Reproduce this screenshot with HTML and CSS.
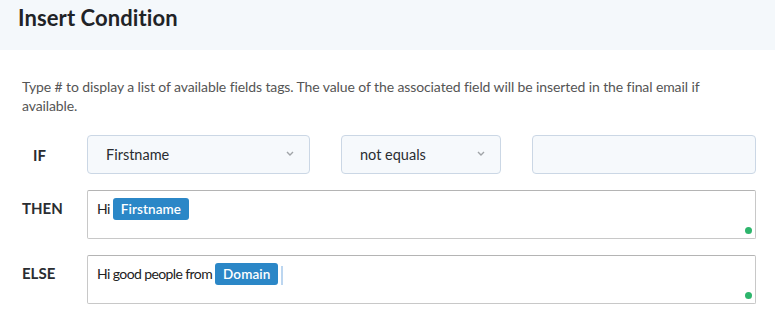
FILE: index.html
```html
<!DOCTYPE html>
<html lang="en">
<head>
  <meta charset="UTF-8">
  <meta name="viewport" content="width=device-width, initial-scale=1.0">
  <title>Insert Condition</title>
  <link rel="stylesheet" href="styles.css">
</head>
<body>
  <div class="header">
    <h1>Insert Condition</h1>
  </div>

  <div class="content">
    <p class="hint">Type # to display a list of available fields tags. The value of the associated field will be inserted in the final email if available.</p>

    <div class="row row-if">
      <div class="label label-if">IF</div>
      <div class="select select-field">
        <span>Firstname</span>
        <svg class="chevron" width="8" height="5" viewBox="0 0 8 5"><path d="M1 1 L4 4 L7 1" fill="none" stroke="#a0a4a8" stroke-width="1.4"/></svg>
      </div>
      <div class="select select-op">
        <span>not equals</span>
        <svg class="chevron" width="8" height="5" viewBox="0 0 8 5"><path d="M1 1 L4 4 L7 1" fill="none" stroke="#a0a4a8" stroke-width="1.4"/></svg>
      </div>
      <div class="select select-value"></div>
    </div>

    <div class="row">
      <div class="label">THEN</div>
      <div class="editor">
        Hi <span class="tag">Firstname</span>
        <span class="dot"></span>
      </div>
    </div>

    <div class="row">
      <div class="label">ELSE</div>
      <div class="editor">
        Hi good people from <span class="tag">Domain</span><span class="caret"></span>
        <span class="dot"></span>
      </div>
    </div>
  </div>
</body>
</html>
```

FILE: styles.css
```css
body {
  margin: 0;
  font-family: Lato, 'Open Sans', sans-serif;
  color: #333;
  background: #fff;
}
.header {
  background: #f4f8fb;
  height: 50px;
  padding: 0 18px;
  display: flex;
  align-items: center;
}
h1 {
  margin: 0 0 16px;
  font-size: 22px;
  font-weight: 700;
  color: #1f2327;
  letter-spacing: 0.1px;
}
.content {
  padding: 0 19px 0 22px;
}
.hint {
  margin: 27px 0 20px;
  font-size: 14px;
  line-height: 19px;
  letter-spacing: -0.1px;
  color: #555;
}
.row {
  display: flex;
  margin-bottom: 16px;
}
.label {
  width: 65px;
  flex-shrink: 0;
  font-size: 15px;
  font-weight: 700;
  color: #2a2d31;
  padding-top: 9px;
}
.label-if {
  padding-top: 11px;
  padding-left: 11px;
  width: 54px;
}
.row-if {
  gap: 31px;
}
.row-if .label {
  margin-right: -31px;
}
.select {
  height: 37px;
  border: 1px solid #cbd7e5;
  border-radius: 4px;
  background: #f6f9fc;
  display: flex;
  align-items: center;
  justify-content: space-between;
  padding: 0 15px 0 18px;
  font-size: 14.5px;
  color: #2a2d31;
}
.select-field {
  width: 188px;
}
.select-op {
  width: 125px;
}
.select-value {
  flex: 1;
}
.chevron {
  margin-top: -3px;
}
.editor {
  position: relative;
  flex: 1;
  height: 40px;
  border: 1px solid #c8c8c8;
  border-top-color: #b4b4b4;
  border-radius: 2px;
  padding: 7px 10px 0 9px;
  font-size: 14px;
  line-height: 22px;
  letter-spacing: -0.6px;
  color: #222;
}
.tag {
  display: inline-block;
  background: #2b87c7;
  color: #fff;
  border-radius: 3px;
  padding: 0 8px;
  height: 22px;
  line-height: 22px;
  font-size: 13.5px;
  font-weight: 600;
  letter-spacing: 0.1px;
}
.caret {
  display: inline-block;
  width: 2px;
  height: 19px;
  margin-left: 3px;
  vertical-align: middle;
  background: #bcd6f0;
}
.dot {
  position: absolute;
  right: 3px;
  bottom: 4px;
  width: 7px;
  height: 7px;
  border-radius: 50%;
  background: #2db56c;
}
```
